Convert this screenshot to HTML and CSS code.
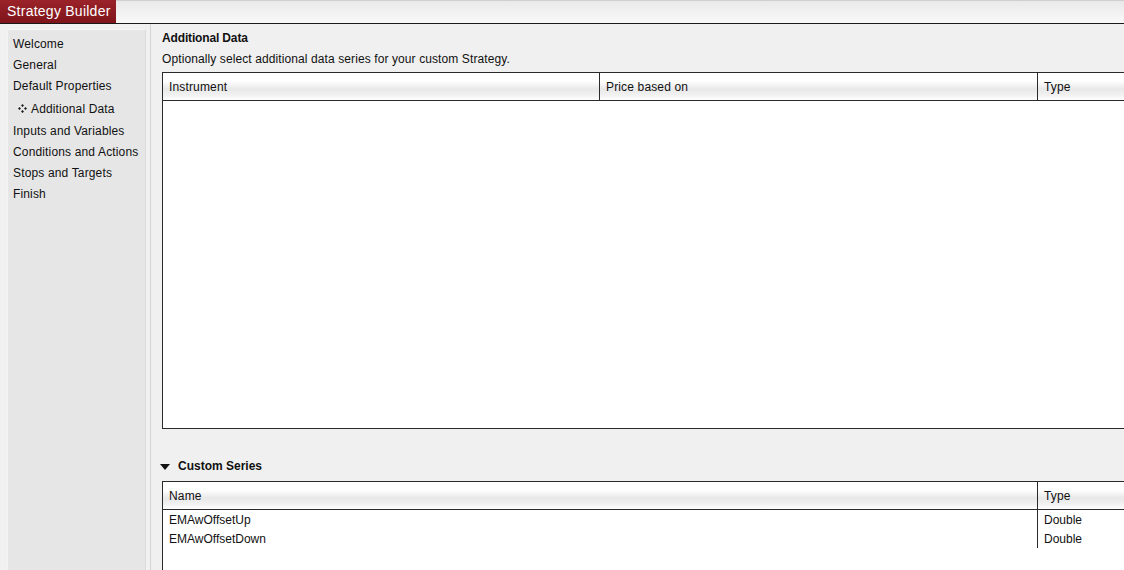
FILE: index.html
```html
<!DOCTYPE html>
<html>
<head>
<meta charset="utf-8">
<link rel="stylesheet" href="styles.css">
</head>
<body>
<div class="app">
  <div class="topbar">
    <div class="tab">Strategy Builder</div>
  </div>
  <div class="body">
    <div class="sidebar">
      <ul class="nav">
        <li>Welcome</li>
        <li>General</li>
        <li>Default Properties</li>
        <li class="current"><svg class="bullet" width="9" height="9" viewBox="0 0 9 9"><path d="M4.5 0 L6 1.5 L4.5 3 L3 1.5 Z M4.5 6 L6 7.5 L4.5 9 L3 7.5 Z M1.5 3 L3 4.5 L1.5 6 L0 4.5 Z M7.5 3 L9 4.5 L7.5 6 L6 4.5 Z" fill="#222"/></svg>Additional Data</li>
        <li>Inputs and Variables</li>
        <li>Conditions and Actions</li>
        <li>Stops and Targets</li>
        <li>Finish</li>
      </ul>
    </div>
    <div class="main">
      <div class="title">Additional Data</div>
      <div class="subtitle">Optionally select additional data series for your custom Strategy.</div>
      <div class="grid grid-data">
        <div class="grid-head">
          <div class="col c1">Instrument</div>
          <div class="col c2">Price based on</div>
          <div class="col c3">Type</div>
        </div>
      </div>
      <div class="section">
        <span class="tri"></span>
        <span class="section-label">Custom Series</span>
      </div>
      <div class="grid grid-series">
        <div class="grid-head">
          <div class="col c12">Name</div>
          <div class="col c3">Type</div>
        </div>
        <div class="grid-body">
          <div class="grid-row">
            <div class="cell c12">EMAwOffsetUp</div>
            <div class="cell c3">Double</div>
          </div>
          <div class="grid-row">
            <div class="cell c12">EMAwOffsetDown</div>
            <div class="cell c3">Double</div>
          </div>
        </div>
      </div>
    </div>
  </div>
</div>
</body>
</html>
```

FILE: styles.css
```css
* { box-sizing: border-box; }
html, body { margin: 0; padding: 0; }
body {
  font-family: "Liberation Sans", Arial, sans-serif;
  font-size: 12px;
  color: #111;
  background: #f0f0f0;
}
.app {
  width: 1124px;
  height: 570px;
  overflow: hidden;
  display: flex;
  flex-direction: column;
}
.topbar {
  height: 24px;
  flex: none;
  border-top: 1px solid #cfcfcf;
  border-bottom: 1px solid #1a1a1a;
  background: linear-gradient(#e9e9e9, #f9f9f9);
  display: flex;
}
.tab {
  width: 116px;
  margin-top: -1px;
  height: 23px;
  background: linear-gradient(#9a2329, #7f141b);
  color: #fff;
  font-size: 14px;
  line-height: 23px;
  padding-left: 7px;
  white-space: nowrap;
  letter-spacing: 0.25px;
}
.body {
  flex: 1;
  display: flex;
  min-height: 0;
}
.sidebar {
  width: 151px;
  flex: none;
  padding: 5px 4px 0 7px;
  background: #f1f1f1;
  border-right: 1px solid #d4d4d4;
}
.nav {
  list-style: none;
  margin: 0;
  padding: 5px 0 0 5px;
  height: 100%;
  background: #e6e6e6;
  border-left: 1px solid #f4f4f4;
  border-top: 1px solid #f4f4f4;
  border-right: 1px solid #dcdcdc;
}
.nav li {
  height: 21px;
  line-height: 18px;
  white-space: nowrap;
  letter-spacing: 0.15px;
}
.nav li.current {
  padding-left: 5px;
  height: 24px;
  line-height: 22px;
  display: flex;
  align-items: center;
  padding-bottom: 2px;
}
.bullet {
  flex: none;
  margin-right: 4px;
  margin-top: -2px;
}
.main {
  flex: 1;
  min-width: 0;
  padding: 7px 0 0 11px;
  background: #f0f0f0;
  overflow: hidden;
}
.title {
  font-weight: bold;
  height: 15px;
  line-height: 15px;
  letter-spacing: -0.15px;
}
.subtitle {
  margin-top: 6px;
  height: 15px;
  line-height: 15px;
  letter-spacing: 0.1px;
}
.grid {
  width: 1000px;
  background: #fff;
  border: 1px solid #2a2a2a;
  border-right: none;
}
.grid-data {
  margin-top: 5px;
  height: 357px;
}
.grid-head {
  display: flex;
  height: 28px;
  border-bottom: 1px solid #2a2a2a;
  background: linear-gradient(#ffffff 0%, #ffffff 30%, #e8e8e8 60%, #f3f3f3 85%, #ffffff 100%);
}
.col {
  line-height: 27px;
  padding-top: 1px;
  padding-left: 6px;
  border-right: 1px solid #2a2a2a;
  white-space: nowrap;
  letter-spacing: 0.15px;
}
.c1 { width: 437px; }
.c2 { width: 438px; }
.c12 { width: 875px; }
.col.c3, .cell.c3 { flex: 1; border-right: none; }
.section {
  margin-top: 23px;
  height: 29px;
  padding-bottom: 1px;
  display: flex;
  align-items: center;
  font-weight: bold;
}
.tri {
  width: 0;
  height: 0;
  border-left: 5px solid transparent;
  border-right: 5px solid transparent;
  border-top: 6px solid #111;
  margin-left: -2px;
  margin-right: 8px;
  margin-top: 1px;
}
.grid-series {
  height: 120px;
}
.grid-row {
  display: flex;
  height: 19px;
}
.cell {
  height: 19px;
  line-height: 18px;
  padding-top: 1px;
  padding-left: 6px;
  border-right: 1px solid #2a2a2a;
  white-space: nowrap;
}
```
